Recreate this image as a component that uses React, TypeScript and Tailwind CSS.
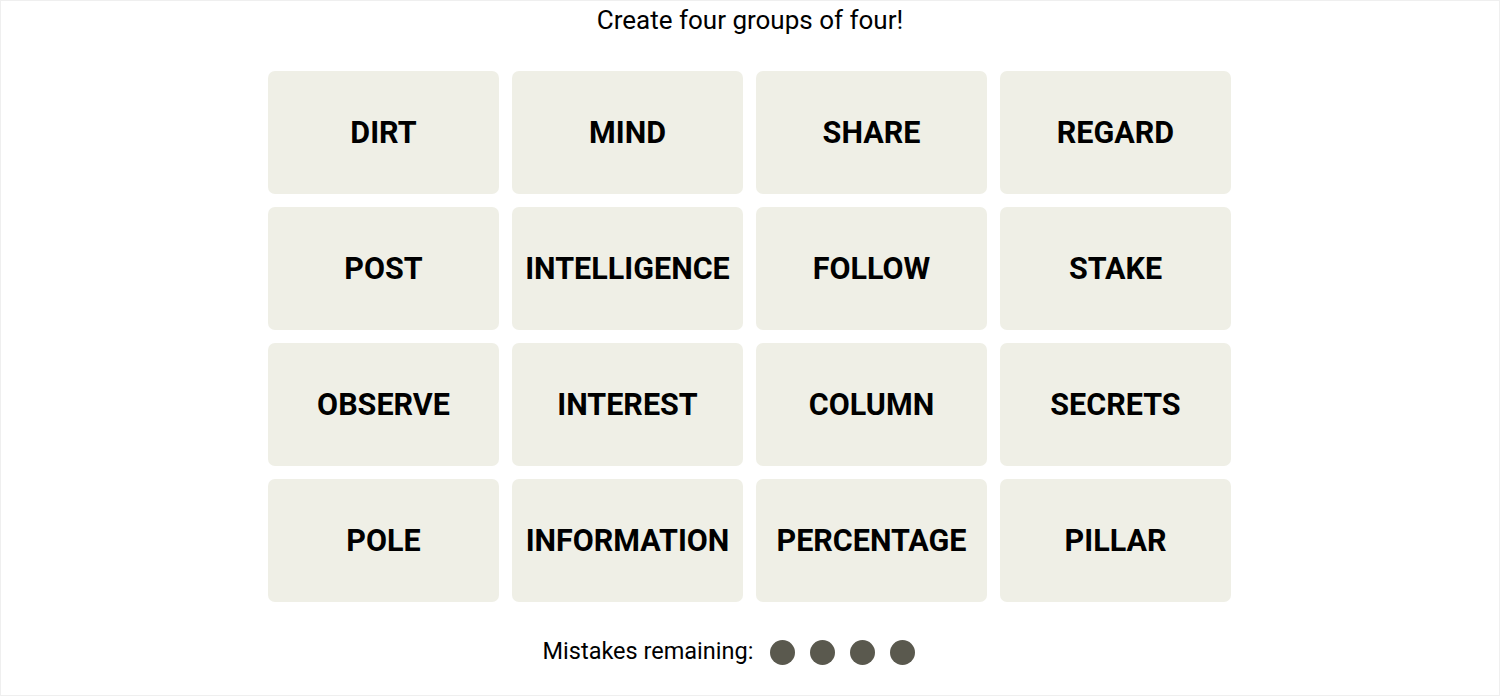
const WORDS = [
  "DIRT",
  "MIND",
  "SHARE",
  "REGARD",
  "POST",
  "INTELLIGENCE",
  "FOLLOW",
  "STAKE",
  "OBSERVE",
  "INTEREST",
  "COLUMN",
  "SECRETS",
  "POLE",
  "INFORMATION",
  "PERCENTAGE",
  "PILLAR",
];

const MISTAKES_LEFT = 4;

export default function App() {
  return (
    <div
      className="w-full h-[696px] shadow-[inset_0_0_0_1px_#efefef] bg-white flex flex-col items-center text-black"
      style={{ fontFamily: "Roboto, 'Liberation Sans', sans-serif" }}
    >
      {/* Heading */}
      <h1 className="text-[26px] leading-[40px] font-normal">
        Create four groups of four!
      </h1>

      {/* Board */}
      <div className="mt-[31px] grid grid-cols-[repeat(4,231px)] auto-rows-[123px] gap-[13px] pr-px">
        {WORDS.map((word) => (
          <button
            key={word}
            className="rounded-[7px] bg-[#efefe6] flex items-center justify-center text-[30.5px] font-bold uppercase"
          >
            {word}
          </button>
        ))}
      </div>

      {/* Mistakes */}
      <div className="mt-[30px] h-[40px] flex items-center pr-[42px]">
        <span className="text-[23.5px]">Mistakes remaining:</span>
        <div className="ml-[17px] flex items-center gap-[15px]">
          {Array.from({ length: MISTAKES_LEFT }).map((_, i) => (
            <span key={i} className="w-[25px] h-[25px] rounded-full bg-[#5a594e]" />
          ))}
        </div>
      </div>
    </div>
  );
}
